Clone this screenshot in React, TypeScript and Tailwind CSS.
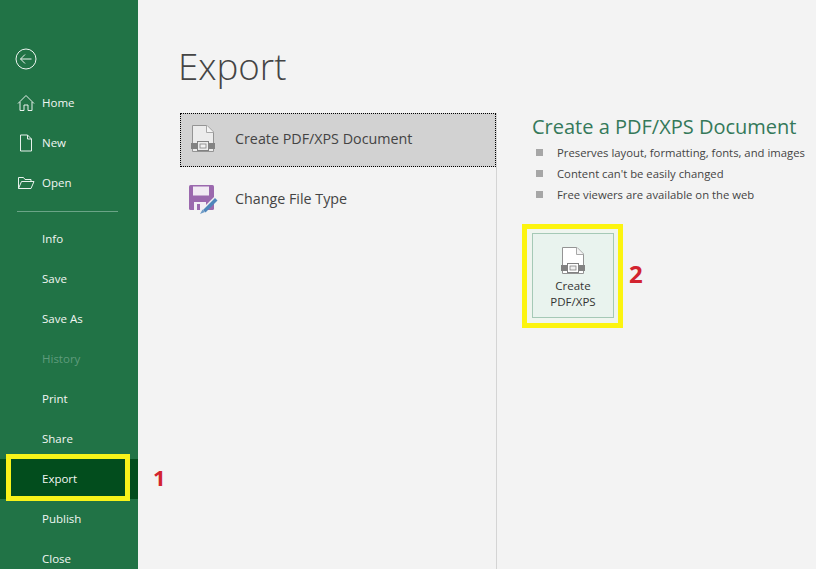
const F = "font-['Open_Sans','Noto_Sans',sans-serif]";

function DocIcon({ fill }: { fill: string }) {
  return (
    <svg viewBox="0 0 24 27" className="w-[24px] h-[27px] shrink-0" fill="none">
      <path d="M1.500 .5H16L22.500 7V26.500H1.500z" fill={fill} stroke="#949494" />
      <path d="M15.500 .5V7.500H22.500" fill="#f4f4f4" stroke="#a8a8a8" />
      <rect x="0" y="18" width="24" height="6" fill="#828282" />
      <rect x="6.500" y="16.500" width="11" height="9" fill={fill} stroke="#828282" strokeWidth="1" />
      <rect x="9" y="19" width="6" height="4" fill="#f0f0f0" stroke="#828282" strokeWidth="0.8" />
    </svg>
  );
}

function SaveIcon() {
  return (
    <svg viewBox="0 0 30 30" className="w-[30px] h-[30px] shrink-0">
      <rect x="0" y="0" width="25" height="25" rx="1.500" fill="#9b69ae" />
      <rect x="4" y="1.500" width="16" height="9" fill="#f1eaf3" />
      <rect x="5" y="17" width="12" height="8" fill="#f3eef5" />
      <rect x="8" y="19" width="3" height="6" fill="#9b69ae" />
      <path d="M13 24L26 11l3 3-13 13z" fill="#f2f2f2" />
      <path d="M14 25L26 13l2.500 2.500L16.500 27.500z" fill="#4f86bb" />
      <path d="M11 29l2.500-4.500 2.500 2.500z" fill="#6f9bc6" />
    </svg>
  );
}

function NavIcon({ name }: { name: string }) {
  if (name === "Home")
    return (
      <svg viewBox="0 0 18 18" className="w-[18px] h-[18px]" fill="none" stroke="#e8f1ec" strokeWidth="1">
        <path d="M1 9.500L9 1.500l8 8M3 8v8.500h4V11h4v5.500h4V8" />
      </svg>
    );
  if (name === "New")
    return (
      <svg viewBox="0 0 18 18" className="w-[18px] h-[18px]" fill="none" stroke="#e8f1ec" strokeWidth="1">
        <path d="M3.500 1h7l4 4v12h-11zM10.500 1v4h4" />
      </svg>
    );
  return (
    <svg viewBox="0 0 18 18" className="w-[18px] h-[18px]" fill="none" stroke="#e8f1ec" strokeWidth="1">
      <path d="M1.500 14.500V3.500h5l1.500 2h6v2M1.500 14.500l3-7h12.500l-3 7z" />
    </svg>
  );
}

function NavRow({ label, icon, muted, active }: { label: string; icon?: boolean; muted?: boolean; active?: boolean }) {
  return (
    <div className={`h-10 flex items-center shrink-0 ${active ? "bg-[#024d1d]" : ""}`}>
      {icon ? (
        <div className="w-[42px] pl-[17px] flex">
          <NavIcon name={label} />
        </div>
      ) : (
        <div className="w-[42px]" />
      )}
      <span className={`text-[11.5px] leading-none mb-[1px] ${muted ? "text-[#5f9b7c]" : "text-[#f1f6f3]"}`}>{label}</span>
    </div>
  );
}

export default function App() {
  return (
    <div className={`relative w-[816px] h-[569px] overflow-hidden flex bg-[#f3f3f3] ${F}`}>
      <aside className="w-[138px] shrink-0 bg-[#217346] flex flex-col pt-[48px]">
        <div className="pl-[15px] h-[35px] shrink-0">
          <svg viewBox="0 0 22 22" className="w-[22px] h-[22px]" fill="none" stroke="#eef5f1" strokeWidth="1">
            <circle cx="11" cy="11" r="10" />
            <path d="M5.500 11h11M10 6.500L5.500 11l4.500 4.500" />
          </svg>
        </div>
        <NavRow label="Home" icon />
        <NavRow label="New" icon />
        <NavRow label="Open" icon />
        <div className="ml-[17px] mr-[20px] mt-[8px] mb-[7px] h-px bg-[#6ba487] shrink-0" />
        <NavRow label="Info" />
        <NavRow label="Save" />
        <NavRow label="Save As" />
        <NavRow label="History" muted />
        <NavRow label="Print" />
        <NavRow label="Share" />
        <NavRow label="Export" active />
        <NavRow label="Publish" />
        <NavRow label="Close" />
      </aside>

      <main className="flex-1 flex flex-col">
        <h1 className="ml-[40px] mt-[39px] text-[36.700px] leading-[54px] font-light text-[#444444] h-[54px]">Export</h1>
        <div className="flex flex-1 mt-[20px] ml-[42px]">
          <div className="border-r border-[#d4d4d4] shrink-0 w-[317px] flex flex-col">
            <div className="w-[316px] h-[54px] bg-[#d2d2d2] border border-dotted border-black flex items-center">
              <div className="w-[54px] pl-[10px] mb-[3px] flex">
                <DocIcon fill="#ececec" />
              </div>
              <span className="text-[14.3px] text-[#444444] mb-[2px]">Create PDF/XPS Document</span>
            </div>
            <div className="h-[54px] mt-[5px] flex items-center">
              <div className="w-[55px] pl-[9px] mt-[2px] flex">
                <SaveIcon />
              </div>
              <span className="text-[14.3px] text-[#444444]">Change File Type</span>
            </div>
          </div>
          <div className="pl-[35px] flex flex-col">
            <h2 className="text-[20px] leading-[28px] text-[#35795a] whitespace-nowrap">Create a PDF/XPS Document</h2>
            <ul className="mt-[2px] flex flex-col">
              {["Preserves layout, formatting, fonts, and images", "Content can't be easily changed", "Free viewers are available on the web"].map((t) => (
                <li key={t} className="h-[21px] flex items-center whitespace-nowrap text-[11.3px] text-[#444444]">
                  <span className="w-[7px] h-[7px] bg-[#a6a6a6] ml-[4px] mr-[14px] mb-[3px] shrink-0" />
                  {t}
                </li>
              ))}
            </ul>
            <div className="mt-[18px] ml-[-10px] w-[101px] h-[104px] border-[5px] border-[#fcf40f] bg-[#eff5ef] pl-[5px] pt-[4px]">
              <div className="w-[82px] h-[85px] bg-[#e9f3ee] border border-[#a5c9b6] flex flex-col items-center pt-[13px]">
                <DocIcon fill="#ffffff" />
                <span className="text-[11.5px] leading-[16px] mt-[4px] text-center text-[#333333]">
                  Create
                  <br />
                  PDF/XPS
                </span>
              </div>
            </div>
          </div>
        </div>
      </main>

      <div className="absolute left-[6px] top-[454px] w-[124px] h-[47px] border-[5px] border-[#f7f31a]" />
      <span className="absolute left-[153px] top-[463px] text-[22px] leading-[28px] font-bold text-[#d2232f]">1</span>
      <span className="absolute left-[629px] top-[260px] text-[24px] leading-[28px] font-bold text-[#d2232f]">2</span>
    </div>
  );
}
